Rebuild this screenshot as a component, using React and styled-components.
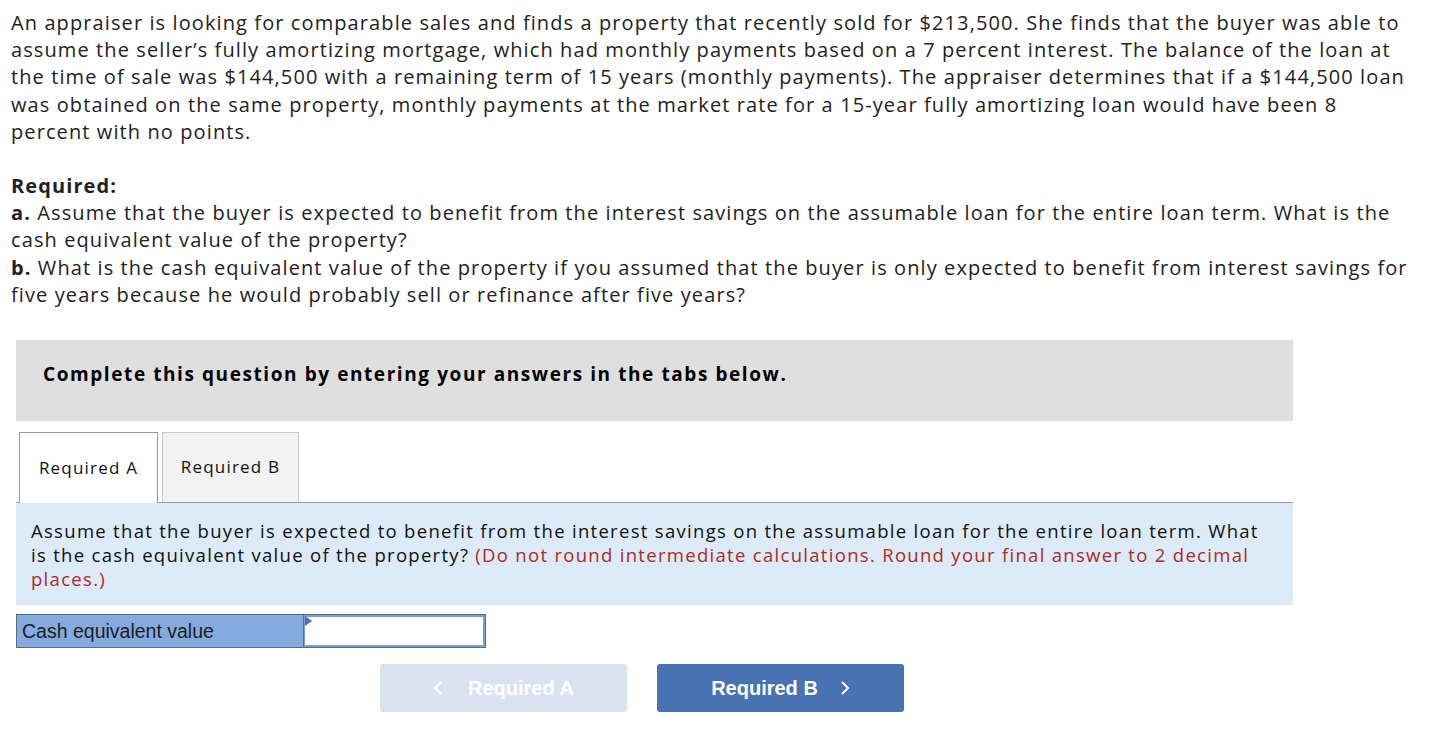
import React from "react";
import styled, { createGlobalStyle } from "styled-components";

const Global = createGlobalStyle`
  html, body { margin: 0; padding: 0; background: #fff; }
  body { width: 1438px; }
`;

const Page = styled.div`
  padding: 9px 0 0 11px;
  width: 1427px;
`;

const Prose = styled.p`
  margin: 0;
  font-family: "Open Sans", sans-serif;
  font-size: 20px;
  line-height: 27.2px;
  letter-spacing: 1.1px;
  color: #222;
  white-space: nowrap;
`;

const Required = styled(Prose)`
  margin-top: 27px;
`;

const Strong = styled.b`
  font-weight: 700;
`;

const Question = styled.section`
  margin: 32px 0 0 5px;
  width: 1277px;
  font-family: "Open Sans", sans-serif;
  white-space: nowrap;
`;

const Banner = styled.div`
  background: #dfdfdf;
  height: 81px;
  box-sizing: border-box;
  display: flex;
  align-items: center;
  padding: 0 0 13px 27px;
  font-weight: 700;
  font-size: 19px;
  letter-spacing: 1.58px;
  color: #000;
`;

const TabBar = styled.div`
  display: flex;
  gap: 4px;
  margin-top: 11px;
  padding-left: 3px;
  border-bottom: 1px solid #9a9a9a;
`;

const Tab = styled.div`
  width: ${(p) => p.w}px;
  box-sizing: border-box;
  display: flex;
  align-items: center;
  justify-content: center;
  padding-bottom: 2px;
  font-size: 17px;
  letter-spacing: 1.2px;
  color: #111;
  border: 1px solid ${(p) => (p.active ? "#999" : "#c9c9c9")};
  border-bottom: none;
  background: ${(p) => (p.active ? "#fff" : "#f2f2f2")};
  margin-bottom: ${(p) => (p.active ? "-1px" : "0")};
  height: ${(p) => (p.active ? "71px" : "70px")};
`;

const Instructions = styled.div`
  background: #ddeaf7;
  padding: 16px 15px 14px 15px;
  font-size: 18.5px;
  letter-spacing: 1.3px;
  line-height: 24px;
  color: #111;
`;

const Note = styled.span`
  color: #b02a22;
`;

const AnswerRow = styled.div`
  display: flex;
  margin-top: 9px;
  width: 470px;
  height: 34px;
  box-sizing: border-box;
  border: 1px solid #5f6b78;
  font-family: "Liberation Sans", Arial, sans-serif;
`;

const AnswerLabel = styled.div`
  width: 287px;
  background: #84abdf;
  border-right: 1px solid #5f6b78;
  display: flex;
  align-items: center;
  padding-left: 5px;
  box-sizing: border-box;
  font-size: 19.5px;
  color: #1d1d1d;
`;

const AnswerCell = styled.div`
  position: relative;
  flex: 1;
  background: #fff;
  border: 2px solid #7a9ed3;
  border-left-width: 1px;
`;

const Flag = styled.span`
  position: absolute;
  left: 0;
  top: -1px;
  width: 0;
  height: 0;
  border-top: 5px solid transparent;
  border-bottom: 5px solid transparent;
  border-left: 7px solid #4a74b8;
`;

const Nav = styled.div`
  display: flex;
  gap: 30px;
  margin: 16px 0 0 364px;
`;

const NavButton = styled.button`
  width: 247px;
  height: 48px;
  border: none;
  border-radius: 3px;
  background: ${(p) => (p.disabled ? "#d9e3f0" : "#4873b3")};
  color: #fff;
  font-family: "Liberation Sans", Arial, sans-serif;
  font-weight: 700;
  font-size: 20px;
  display: flex;
  align-items: center;
  justify-content: center;
  gap: ${(p) => (p.disabled ? "25px" : "22px")};
  padding: 0;
  cursor: ${(p) => (p.disabled ? "default" : "pointer")};
`;

const Chevron = ({ dir }) => (
  <svg width="10" height="16" viewBox="0 0 10 16" fill="none">
    <path
      d={dir === "left" ? "M8 2 L2 8 L8 14" : "M2 2 L8 8 L2 14"}
      stroke="#fff"
      strokeWidth="2"
    />
  </svg>
);

export default function App() {
  return (
    <>
      <Global />
      <Page>
        <Prose>
          An appraiser is looking for comparable sales and finds a property that recently sold for $213,500. She finds that the buyer was able to
          <br />
          assume the seller’s fully amortizing mortgage, which had monthly payments based on a 7 percent interest. The balance of the loan at
          <br />
          the time of sale was $144,500 with a remaining term of 15 years (monthly payments). The appraiser determines that if a $144,500 loan
          <br />
          was obtained on the same property, monthly payments at the market rate for a 15-year fully amortizing loan would have been 8
          <br />
          percent with no points.
        </Prose>
        <Required>
          <Strong>Required:</Strong>
          <br />
          <Strong>a.</Strong> Assume that the buyer is expected to benefit from the interest savings on the assumable loan for the entire loan term. What is the
          <br />
          cash equivalent value of the property?
          <br />
          <Strong>b.</Strong> What is the cash equivalent value of the property if you assumed that the buyer is only expected to benefit from interest savings for
          <br />
          five years because he would probably sell or refinance after five years?
        </Required>
        <Question>
          <Banner>Complete this question by entering your answers in the tabs below.</Banner>
          <TabBar>
            <Tab active w={139}>Required A</Tab>
            <Tab w={137}>Required B</Tab>
          </TabBar>
          <Instructions>
            Assume that the buyer is expected to benefit from the interest savings on the assumable loan for the entire loan term. What
            <br />
            is the cash equivalent value of the property?{" "}
            <Note>
              (Do not round intermediate calculations. Round your final answer to 2 decimal
              <br />
              places.)
            </Note>
          </Instructions>
          <AnswerRow>
            <AnswerLabel>Cash equivalent value</AnswerLabel>
            <AnswerCell>
              <Flag />
            </AnswerCell>
          </AnswerRow>
          <Nav>
            <NavButton disabled>
              <Chevron dir="left" />
              Required A
            </NavButton>
            <NavButton>
              Required B
              <Chevron dir="right" />
            </NavButton>
          </Nav>
        </Question>
      </Page>
    </>
  );
}
